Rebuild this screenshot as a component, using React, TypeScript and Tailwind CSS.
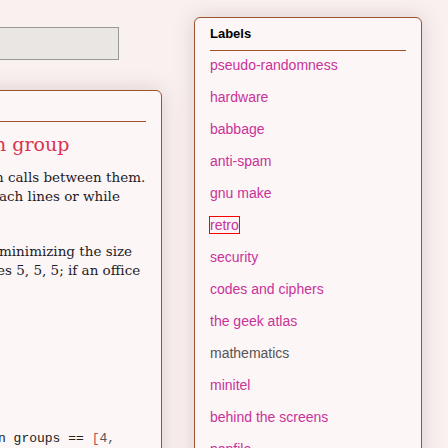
import React from "react";

const labels = [
  "pseudo-randomness",
  "hardware",
  "babbage",
  "anti-spam",
  "gnu make",
  "retro",
  "security",
  "codes and ciphers",
  "the geek atlas",
  "mathematics",
  "minitel",
  "behind the screens",
  "popfile",
];

function ArticleCard() {
  return (
    <div className="mt-[30px] h-[400px] overflow-hidden rounded-tr-[6px] border border-[#a0522d] bg-[#fcf6f6] shadow-[0_0_22px_#5a32322e]">
      <div className="mr-[15px] mt-[30px] border-b border-[#a0522d]" />
      <div className="pt-[8px] font-['DejaVu_Serif',serif] text-[#1c1c28]">
        <h2 className="ml-[33px] whitespace-nowrap text-[19px] leading-[28px] text-[#d9344f]">
          n group
        </h2>
        <div className="mt-[10px] whitespace-nowrap text-[13.5px] leading-[19px]">
          <div className="ml-[34px]">n calls between them.</div>
          <div className="ml-[38px]">ach lines or while</div>
          <div className="mt-[36px] ml-[38px]">minimizing the size</div>
          <div className="ml-[36px]">es 5, 5, 5; if an office</div>
        </div>
        <div className="mt-[150px] ml-[37px] whitespace-nowrap font-['Liberation_Mono',monospace] text-[13px] leading-[18px] text-[#222]">
          n groups == <span className="text-[#c0504d]">[</span>
          <span className="text-[#555]">4,</span>
        </div>
      </div>
    </div>
  );
}

function LabelsCard() {
  return (
    <div className="mt-[17px] h-[460px] w-[228px] rounded-[6px] border border-[#a0522d] bg-[#fcf6f6] px-[15px] font-['Liberation_Sans',Arial,sans-serif] shadow-[0_0_22px_#5a32322e]">
      <div className="pt-[7px] pb-[7px] text-[13px] leading-[18px] font-bold text-black">
        Labels
      </div>
      <div className="border-b border-[#a0522d]" />
      <ul>
        {labels.map((l) => (
          <li key={l} className="pt-[4px] pb-[8px] text-[14px] leading-[20px]">
            <a
              href="#"
              className={
                l === "mathematics"
                  ? "text-[#555]"
                  : l === "retro"
                  ? "text-[#c8329a] outline-1 outline-solid outline-[#ff0000]"
                  : "text-[#c8329a]"
              }
            >
              {l}
            </a>
          </li>
        ))}
      </ul>
    </div>
  );
}

export default function App() {
  return (
    <div className="h-[448px] w-[448px] overflow-hidden bg-[#f9f1f0]">
      <div className="flex">
        <div className="ml-[-40px] w-[202px] shrink-0">
          <div className="mt-[27px] h-[33px] w-[159px] border border-[#999] bg-[#e9e6e3]" />
          <ArticleCard />
        </div>
        <div className="ml-[32px] shrink-0">
          <LabelsCard />
        </div>
      </div>
    </div>
  );
}
